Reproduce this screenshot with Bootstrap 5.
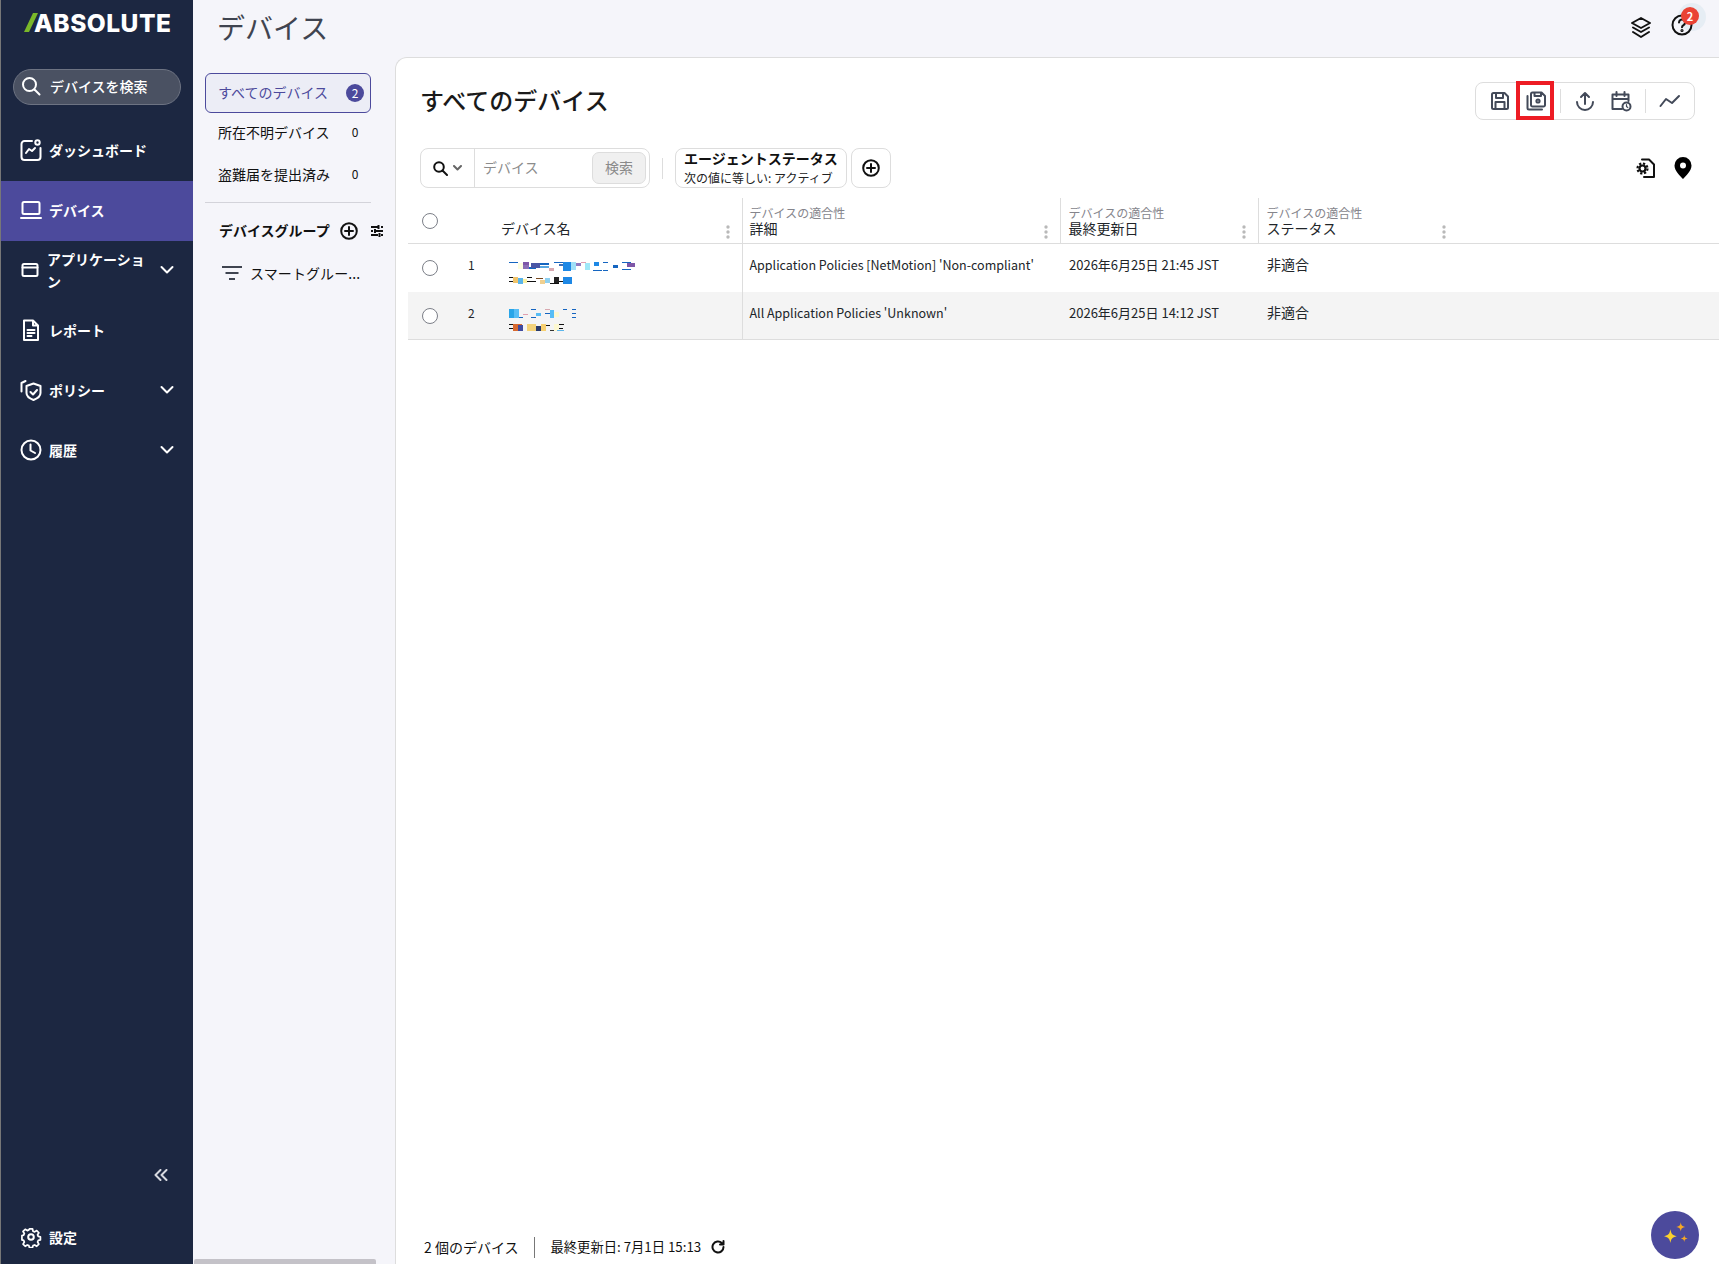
<!DOCTYPE html>
<html lang="ja">
<head>
  <meta charset="UTF-8">
  <title>デバイス</title>
  <link href="https://cdn.jsdelivr.net/npm/bootstrap@5.3.0/dist/css/bootstrap.min.css" rel="stylesheet">
  <style>
    html, body { height: 100%; }
    body {
      font-family: "Noto Sans CJK JP", "Noto Sans", sans-serif;
      background: #f5f5fa;
      color: #111;
      overflow: hidden;
    }
    svg { display: block; flex-shrink: 0; }
    .ico { fill: none; stroke: currentColor; stroke-width: 2; stroke-linecap: round; stroke-linejoin: round; }
    .app-root { height: 1264px; }

    /* sidebar */
    .side-bar { width: 193px; background: #1c2741; border-left: 1px solid #777; color: #fff; flex-shrink: 0; }
    .logo-row { height: 46px; padding: 13px 0 0 22px; }
    .logo-text { font-family: Inter, "Liberation Sans", sans-serif; font-weight: 800; font-size: 24.5px; line-height: 20px; letter-spacing: .5px; margin-left: -7px; }
    .side-search { margin: 23px 12px 0 12px; height: 36px; border-radius: 18px; background: #4a5162; border: 1px solid #6d7382; padding-left: 7px; padding-bottom: 2px; gap: 9px; font-size: 14px; font-weight: 500; }
    .side-list { margin-top: 16px; }
    .side-item { height: 60px; padding: 0 19px 2px 19px; font-size: 14px; font-weight: 700; gap: 7px; }
    .side-item.on { background: #4c4a9c; }
    .side-item.last-item { height: 54px; padding-bottom: 0; }
    .side-item .lbl { line-height: 22px; }
    .side-wrap { width: 100px; }
    .side-foot { margin-top: auto; }
    .collapse-row { padding: 0 25px 29px 0; color: #d8dae0; }

    /* top */
    .page-top { height: 57px; padding: 8px 20px 0 24px; }
    .page-title { font-size: 28px; font-weight: 400; line-height: 38px; margin: 0; color: #3f4450; }
    .top-icons { margin-top: 6px; }
    .help-wrap { width: 28px; height: 28px; position: relative; margin-left: 19px; }
    .help-halo { position: absolute; left: 7px; top: -11px; width: 28px; height: 28px; border-radius: 50%; background: #e6edf4; }
    .help-wrap svg { position: relative; }
    .help-badge { position: absolute; left: 10px; top: -7px; width: 18px; height: 18px; border-radius: 50%; background: #ea4335; color: #fff; font-size: 11px; font-weight: 700; line-height: 18px; text-align: center; }

    /* middle column */
    .mid-col { width: 202px; padding: 16px 0 0 12px; flex-shrink: 0; position: relative; }
    .mid-item { width: 166px; height: 40px; padding: 0 6px 2px 12px; font-size: 14px; border: 1px solid transparent; border-radius: 6px; }
    .mid-item.on { background: #ecedf6; border-color: #4c4a9c; color: #4c4a9c; }
    .mid-item.third-item { margin-top: 1px; padding-bottom: 0; }
    .mid-count { width: 18px; text-align: center; font-size: 12px; }
    .mid-item.on .mid-count { height: 18px; border-radius: 50%; background: #4c4a9c; color: #fff; line-height: 18px; margin-top: 2px; }
    .mid-divider { width: 166px; border-top: 1px solid #d3d3da; margin: 8px 0 0; }
    .group-head { height: 55px; padding-left: 14px; font-size: 14px; font-weight: 700; width: 190px; }
    .smart-row { padding-left: 17px; height: 30px; font-size: 14px; gap: 8px; letter-spacing: .1px; }
    .mid-scroll { position: absolute; left: 1px; bottom: 0; width: 182px; height: 5px; background: #c4c2c8; border-radius: 2px 2px 0 0; }

    /* main card */
    .main-card { background: #fff; border-top: 1px solid #ddd; border-left: 1px solid #ddd; border-top-left-radius: 12px; padding-left: 12px; position: relative; min-width: 0; }
    .card-head { height: 90px; padding: 24px 23px 0 12px; }
    .card-title-txt { font-size: 24px; font-weight: 500; margin: 1px 0 0; line-height: 34px; color: #1a1a1a; }
    .tool-box { width: 220px; height: 38px; border: 1px solid #ddd; border-radius: 8px; color: #434a59; padding-left: 6px; position: relative; margin-right: 1px; }
    .tool-ico { width: 36px; display: flex; justify-content: center; }
    .tool-sep { width: 1px; height: 24px; background: #ddd; margin: 0 6px; }
    .red-mark { position: absolute; left: 40px; top: -2px; width: 38px; height: 39px; border: 4px solid #ed1c24; }
    .filter-row { height: 50px; padding: 0 26px 0 12px; gap: 4px; }
    .search-box { width: 230px; height: 40px; border: 1px solid #ddd; border-radius: 8px; font-size: 14px; }
    .search-type { width: 54px; height: 100%; border-right: 1px solid #ddd; gap: 5px; padding-left: 12px; }
    .search-hold { color: #8c8c8c; padding: 0 0 2px 8px; }
    .search-btn { width: 54px; height: 32px; margin: 0 3px 0 auto; background: #f0f0f0; border: 1px solid #ddd; border-radius: 7px; color: #8a8a8a; font-size: 14px; padding: 0 0 2px; }
    .filter-sep { width: 1px; height: 21px; background: #ddd; margin: 0 12px; }
    .chip-box { width: 172px; height: 40px; border: 1px solid #ddd; border-radius: 8px; padding: 0 8px; }
    .chip-name { font-size: 14px; font-weight: 700; line-height: 19px; white-space: nowrap; }
    .chip-val { font-size: 12px; line-height: 17px; margin-top: 1px; white-space: nowrap; color: #222; }
    .add-box { width: 40px; height: 40px; border: 1px solid #ddd; border-radius: 8px; margin-left: 4px; }
    .loc-icons { gap: 17px; margin-top: 9px; }

    /* table */
    .dev-table { table-layout: fixed; width: 1311px; margin: 0; }
    .dev-table > :not(caption) > * > * { padding: 0; border-bottom: 1px solid #ddd; background: transparent; box-shadow: none; vertical-align: top; font-weight: 400; }
    .dev-table thead th { height: 45px; }
    .dev-table tbody tr.row-a td { height: 49px; border-bottom: 0; }
    .dev-table tbody tr.row-b td { height: 47px; background: #f4f4f4; }
    .dev-table .with-line { border-left: 1px solid #ddd; }
    .head-in { height: 44px; padding: 0 12px 0 7px; }
    .head-top { font-size: 12px; line-height: 15px; color: #85858c; }
    .head-name { font-size: 14px; line-height: 17px; margin-bottom: 5px; }
    .dots-ico { color: #b9b9b9; margin-bottom: 3px; }
    .check-cell { padding-left: 14px !important; }
    .form-check-input.round-check { width: 16px; height: 16px; margin: 0; border-radius: 50%; border: 1px solid #7c7f88; }
    .num-cell { font-size: 12px; padding: 12px 0 0 16px !important; line-height: 18px; }
    .txt-cell { font-size: 12.500px; line-height: 18px; padding: 12px 0 0 7px !important; white-space: nowrap; }
    .txt-cell.big { font-size: 14px; padding-left: 9px !important; padding-top: 11px !important; }
    .txt-cell.mid { font-size: 13px; padding-left: 9px !important; }

    .foot-row { margin-top: auto; height: 34px; padding: 0 0 0 16px; font-size: 14px; }
    .foot-time { font-size: 13.300px; }
    .foot-sep { width: 1px; height: 21px; background: #777; margin: 0 16px 0 15px; }
    .fab-btn { position: absolute; right: 20px; bottom: 5px; width: 48px; height: 48px; border-radius: 50%; background: #4c4a9c; }
  </style>
</head>
<body>
<div class="d-flex app-root">

  <aside class="side-bar d-flex flex-column">
    <div class="logo-row d-flex align-items-start">
      <svg width="18" height="20" viewBox="0 0 18 20"><polygon points="1,19 6,19 15,0 10,0" fill="#7ab829"/></svg>
      <span class="logo-text">ABSOLUTE</span>
    </div>
    <div class="side-search d-flex align-items-center">
      <svg class="ico" width="20" height="20" viewBox="0 0 20 20" stroke-width="2.200"><circle cx="8.500" cy="8.500" r="6.500"/><path d="M13.500 13.500 18.500 18.500"/></svg>
      <span>デバイスを検索</span>
    </div>
    <div class="side-list">
      <div class="side-item d-flex align-items-center">
        <svg class="ico" width="22" height="22" viewBox="0 0 22 22" stroke-width="1.800"><path d="M12 2H4.500A3 3 0 0 0 1.500 5v13a3 3 0 0 0 3 3h13a3 3 0 0 0 3-3V9"/><circle cx="17.500" cy="3.500" r="2.200"/><path d="M6 14l3-4 3 2 3-3"/></svg>
        <span class="lbl">ダッシュボード</span>
      </div>
      <div class="side-item on d-flex align-items-center">
        <svg class="ico" width="22" height="22" viewBox="0 0 22 22" stroke-width="1.800"><rect x="2.500" y="3" width="17" height="12" rx="1.500"/><path d="M1 19h20"/></svg>
        <span class="lbl">デバイス</span>
      </div>
      <div class="side-item d-flex align-items-center" style="gap:5px">
        <svg class="ico" width="22" height="22" viewBox="0 0 22 22" stroke-width="1.600"><rect x="2.500" y="5" width="15" height="12" rx="1.500"/><path d="M2.500 8.500h15"/></svg>
        <span class="lbl side-wrap">アプリケーション</span>
        <svg class="ico ms-auto" width="14" height="14" viewBox="0 0 14 14" stroke-width="1.300"><path d="M1.500 4 7 9.500 12.500 4"/></svg>
      </div>
      <div class="side-item d-flex align-items-center">
        <svg class="ico" width="22" height="22" viewBox="0 0 22 22" stroke-width="1.800"><path d="M4 1.500h9l5 5v14.500H4zM13 1.500v5h5M7.500 11h7M7.500 14h7M7.500 17h4"/></svg>
        <span class="lbl">レポート</span>
      </div>
      <div class="side-item d-flex align-items-center">
        <svg class="ico" width="22" height="22" viewBox="0 0 22 22" stroke-width="1.700"><path d="M13.500 4.500 20.500 7v7c0 3-3 5.500-7 7-4-1.500-7-4-7-7V7zM10.500 13l2.500 2.500 4-4.500M5.500 2 1.500 4v8.500"/></svg>
        <span class="lbl">ポリシー</span>
        <svg class="ico ms-auto" width="14" height="14" viewBox="0 0 14 14" stroke-width="1.300"><path d="M1.500 4 7 9.500 12.500 4"/></svg>
      </div>
      <div class="side-item d-flex align-items-center">
        <svg class="ico" width="22" height="22" viewBox="0 0 22 22" stroke-width="1.800"><circle cx="11" cy="11" r="9.500"/><path d="M10.500 5.500V11.500L15 14"/></svg>
        <span class="lbl">履歴</span>
        <svg class="ico ms-auto" width="14" height="14" viewBox="0 0 14 14" stroke-width="1.300"><path d="M1.500 4 7 9.500 12.500 4"/></svg>
      </div>
    </div>
    <div class="side-foot">
      <div class="collapse-row d-flex justify-content-end">
        <svg class="ico" width="14" height="12" viewBox="0 0 14 12" stroke-width="1.800"><path d="M6.500 1 1.500 6l5 5M12.500 1l-5 5 5 5"/></svg>
      </div>
      <div class="side-item last-item d-flex align-items-center">
        <svg class="ico" width="22" height="22" viewBox="0 0 22 22" stroke-width="1.700"><circle cx="11" cy="11" r="2.800"/><path d="M9.200 1.500h3.600l.6 2.800 1.900.8 2.400-1.500 2.500 2.500-1.500 2.400.8 1.900 2.500.6v3.400l-2.500.6-.8 1.900 1.500 2.400-2.500 2.500-2.400-1.500-1.900.8-.6 2.300H9.200l-.6-2.300-1.900-.8-2.400 1.500-2.500-2.500 1.500-2.400-.8-1.900-2-.6V9.500l2-.6.800-1.900L1.800 4.600l2.500-2.500L6.700 3.600l1.900-.8z" transform="translate(1.500 1.500) scale(.86)"/></svg>
        <span class="lbl">設定</span>
      </div>
    </div>
  </aside>

  <div class="flex-grow-1 d-flex flex-column" style="min-width:0">
    <header class="page-top d-flex align-items-start justify-content-between">
      <h1 class="page-title">デバイス</h1>
      <div class="top-icons d-flex align-items-center">
        <svg class="ico" width="22" height="24" viewBox="0 0 22 24" stroke-width="1.900"><path d="M11 2 20 7l-9 5-9-5zM3 11.500l8 4.500 8-4.500M3 16l8 5 8-5"/></svg>
        <div class="help-wrap">
          <span class="help-halo"></span>
          <svg class="ico" width="22" height="22" viewBox="0 0 22 22" stroke-width="1.900"><circle cx="11" cy="11" r="9.500"/><path d="M8 8.500a3 3 0 1 1 4.500 2.600c-1 .6-1.500 1.100-1.500 2.200"/><circle cx="11" cy="16.500" r=".6"/></svg>
          <span class="help-badge">2</span>
        </div>
      </div>
    </header>

    <div class="d-flex flex-grow-1" style="min-height:0">
      <nav class="mid-col">
        <div class="mid-item on d-flex align-items-center justify-content-between"><span>すべてのデバイス</span><span class="mid-count">2</span></div>
        <div class="mid-item d-flex align-items-center justify-content-between"><span>所在不明デバイス</span><span class="mid-count">0</span></div>
        <div class="mid-item third-item d-flex align-items-center justify-content-between"><span>盗難届を提出済み</span><span class="mid-count">0</span></div>
        <div class="mid-divider"></div>
        <div class="group-head d-flex align-items-center">
          <span>デバイスグループ</span>
          <svg class="ico" style="margin-left:10px" width="18" height="18" viewBox="0 0 18 18" stroke-width="1.600"><circle cx="9" cy="9" r="7.800"/><path d="M9 5v8M5 9h8"/></svg>
          <svg class="ico" style="margin-left:12px" width="14" height="14" viewBox="0 0 14 14" stroke-width="1.500"><path d="M1 3h7M11 3h2M8.500 1v4M1 7h2M6 7h7M5 5v4M1 11h7M11 11h2M9.500 9v4" stroke-linecap="butt"/></svg>
        </div>
        <div class="smart-row d-flex align-items-center">
          <svg class="ico" style="color:#3f4450" width="20" height="14" viewBox="0 0 20 14" stroke-width="1.700"><path d="M0 1h20M3.500 7h13M7 13h6" stroke-linecap="butt"/></svg>
          <span>スマートグルー...</span>
        </div>
        <div class="mid-scroll"></div>
      </nav>

      <main class="main-card flex-grow-1 d-flex flex-column">
        <div class="card-head d-flex justify-content-between align-items-start">
          <h2 class="card-title-txt">すべてのデバイス</h2>
          <div class="tool-box d-flex align-items-center">
            <span class="tool-ico"><svg class="ico" width="20" height="20" viewBox="0 0 20 20" stroke-width="1.700"><path d="M2 3.500A1.500 1.500 0 0 1 3.500 2h11L18 5.500v11a1.500 1.500 0 0 1-1.500 1.500h-13A1.500 1.500 0 0 1 2 16.500zM6 2v5h7V2M5.500 18v-7h9v7"/></svg></span>
            <span class="tool-ico"><svg class="ico" width="20" height="20" viewBox="0 0 20 20" stroke-width="1.900"><path d="M6.500 1.500h9L19 5v9a1.500 1.500 0 0 1-1.500 1.500h-11A1.500 1.500 0 0 1 5 14V3a1.500 1.500 0 0 1 1.500-1.500zM8.500 1.500V5h6.500V1.500M1.500 5v12a1.500 1.500 0 0 0 1.500 1.500h13"/><circle cx="12" cy="10" r="1.600"/></svg></span>
            <span class="tool-sep"></span>
            <span class="tool-ico"><svg class="ico" width="20" height="20" viewBox="0 0 20 20" stroke-width="1.800"><path d="M10 13V2M6 6l4-4 4 4M2 11a8 8 0 0 0 16 0"/></svg></span>
            <span class="tool-ico"><svg class="ico" width="22" height="22" viewBox="0 0 22 22" stroke-width="1.700"><path d="M12 19H2.500V4.500h16V11M2.500 9h16M6.500 2v4M14.500 2v4"/><circle cx="16.500" cy="16.500" r="4"/><path d="M16.500 14.500v2l1.300 1" stroke-width="1.200"/></svg></span>
            <span class="tool-sep"></span>
            <span class="tool-ico"><svg class="ico" width="22" height="14" viewBox="0 0 22 14" stroke-width="2"><path d="M1.500 12 7 5l6 4 7-7"/></svg></span>
            <span class="red-mark"></span>
          </div>
        </div>

        <div class="filter-row d-flex align-items-start">
          <div class="d-flex flex-grow-1 align-items-center">
            <div class="search-box d-flex align-items-center">
              <div class="search-type d-flex align-items-center">
                <svg class="ico" width="15" height="15" viewBox="0 0 15 15" stroke-width="1.800"><circle cx="6" cy="6" r="4.800"/><path d="M9.500 9.500 14 14"/></svg>
                <svg class="ico" style="color:#666" width="9" height="6" viewBox="0 0 9 6" stroke-width="1.100"><path d="M1 1l3.500 3.500L8 1"/></svg>
              </div>
              <span class="search-hold">デバイス</span>
              <button type="button" class="btn search-btn">検索</button>
            </div>
            <span class="filter-sep"></span>
            <div class="chip-box d-flex flex-column">
              <span class="chip-name">エージェントステータス</span>
              <span class="chip-val">次の値に等しい: アクティブ</span>
            </div>
            <div class="add-box d-flex align-items-center justify-content-center">
              <svg class="ico" width="18" height="18" viewBox="0 0 18 18" stroke-width="1.600"><circle cx="9" cy="9" r="7.800"/><path d="M9 5v8M5 9h8"/></svg>
            </div>
          </div>
          <div class="loc-icons d-flex align-items-center">
            <svg class="ico" width="20" height="22" viewBox="0 0 20 22" stroke-width="1.800">
              <path d="M6 2.500h7l5 5V20H8"/>
              <circle cx="6.500" cy="11.500" r="5" stroke-width="2.200" stroke-dasharray="2.200 1.700" stroke-linecap="butt"/>
              <circle cx="6.500" cy="11.500" r="3" stroke-width="2.200"/>
            </svg>
            <svg width="20" height="22" viewBox="0 0 20 22"><path fill-rule="evenodd" d="M10 0a8.500 8.500 0 0 1 8.500 8.500C18.500 14 13 18.500 10 22 7 18.500 1.500 14 1.500 8.500A8.500 8.500 0 0 1 10 0zm0 5.500a3 3 0 1 0 0 6 3 3 0 0 0 0-6z" fill="#000"/></svg>
          </div>
        </div>

        <table class="table dev-table">
          <colgroup>
            <col style="width:44px"><col style="width:36px"><col style="width:254px"><col style="width:318px"><col style="width:198px"><col style="width:198px"><col>
          </colgroup>
          <thead>
            <tr>
              <th class="check-cell"><input class="form-check-input round-check" style="margin-top:15px" type="checkbox" aria-label="all"></th>
              <th></th>
              <th>
                <div class="head-in d-flex justify-content-between align-items-end" style="padding-left:13px">
                  <div class="head-name">デバイス名</div>
                  <svg class="dots-ico" width="4" height="14" viewBox="0 0 4 14" fill="currentColor"><circle cx="2" cy="2" r="1.700"/><circle cx="2" cy="7" r="1.700"/><circle cx="2" cy="12" r="1.700"/></svg>
                </div>
              </th>
              <th class="with-line">
                <div class="head-in d-flex justify-content-between align-items-end">
                  <div><div class="head-top">デバイスの適合性</div><div class="head-name">詳細</div></div>
                  <svg class="dots-ico" width="4" height="14" viewBox="0 0 4 14" fill="currentColor"><circle cx="2" cy="2" r="1.700"/><circle cx="2" cy="7" r="1.700"/><circle cx="2" cy="12" r="1.700"/></svg>
                </div>
              </th>
              <th class="with-line">
                <div class="head-in d-flex justify-content-between align-items-end" style="padding-left:8px">
                  <div><div class="head-top">デバイスの適合性</div><div class="head-name">最終更新日</div></div>
                  <svg class="dots-ico" width="4" height="14" viewBox="0 0 4 14" fill="currentColor"><circle cx="2" cy="2" r="1.700"/><circle cx="2" cy="7" r="1.700"/><circle cx="2" cy="12" r="1.700"/></svg>
                </div>
              </th>
              <th class="with-line">
                <div class="head-in d-flex justify-content-between align-items-end" style="padding-left:8px;padding-right:10px">
                  <div><div class="head-top">デバイスの適合性</div><div class="head-name">ステータス</div></div>
                  <svg class="dots-ico" width="4" height="14" viewBox="0 0 4 14" fill="currentColor"><circle cx="2" cy="2" r="1.700"/><circle cx="2" cy="7" r="1.700"/><circle cx="2" cy="12" r="1.700"/></svg>
                </div>
              </th>
              <th></th>
            </tr>
          </thead>
          <tbody>
            <tr class="row-a">
              <td class="check-cell"><input class="form-check-input round-check" style="margin-top:16px" type="checkbox" aria-label="1"></td>
              <td class="num-cell">1</td>
              <td style="padding:18px 0 0 21px">
                <svg width="127" height="23" viewBox="0 0 127 23" shape-rendering="crispEdges">
                  <g fill="#1565c0">
                    <rect x="0" y="0" width="9" height="1"/><rect x="9" y="1" width="5" height="6" fill="#fdfde0"/><rect x="14" y="0" width="6" height="3" fill="#7e57a8"/><rect x="14" y="3" width="6" height="4" fill="#8b6fb5"/><rect x="20" y="5" width="7" height="2"/><rect x="22" y="1" width="9" height="5" fill="#4a56a5"/><rect x="31" y="1" width="9" height="2"/><rect x="31" y="4" width="9" height="2" fill="#5aa7e0"/><rect x="40" y="6" width="5" height="3" fill="#d8a9b0"/><rect x="45" y="0" width="9" height="1"/><rect x="50" y="2" width="6" height="2" fill="#3f6fb5"/><rect x="54" y="0" width="8" height="9" fill="#1e88e5"/><rect x="62" y="0" width="5" height="8" fill="#9fe0f8"/><rect x="67" y="1" width="5" height="3" fill="#8e7ac0"/><rect x="72" y="0" width="5" height="1" fill="#e0a0b0"/><rect x="76" y="1" width="5" height="7" fill="#9fe8f8"/><rect x="84" y="8" width="9" height="1"/><rect x="85" y="0" width="5" height="4" fill="#1e88e5"/><rect x="94" y="0" width="5" height="1"/><rect x="94" y="8" width="5" height="1"/><rect x="104" y="3" width="5" height="3" fill="#1565c0"/><rect x="113" y="0" width="9" height="1"/><rect x="113" y="7" width="9" height="1"/><rect x="118" y="1" width="8" height="4" fill="#7e57a8"/>
                  </g>
                  <g fill="#111">
                    <rect x="0" y="15" width="8" height="1"/><rect x="0" y="19" width="8" height="1"/><rect x="4" y="15" width="5" height="6" fill="#f0c36a"/><rect x="9" y="16" width="5" height="6" fill="#5bb5ea"/><rect x="14" y="17" width="4" height="4" fill="#fbf0a0"/><rect x="18" y="15" width="5" height="1"/><rect x="18" y="19" width="9" height="1"/><rect x="27" y="16" width="7" height="1" fill="#7a4a20"/><rect x="31" y="18" width="5" height="4" fill="#f0d090"/><rect x="36" y="16" width="5" height="5" fill="#8fd0f0"/><rect x="41" y="21" width="9" height="1"/><rect x="45" y="15" width="5" height="6" fill="#222"/><rect x="50" y="19" width="9" height="1"/><rect x="54" y="15" width="9" height="7" fill="#1e88e5"/>
                  </g>
                </svg>
              </td>
              <td class="with-line txt-cell">Application Policies [NetMotion] 'Non-compliant'</td>
              <td class="txt-cell mid">2026年6月25日 21:45 JST</td>
              <td class="txt-cell big">非適合</td>
              <td></td>
            </tr>
            <tr class="row-b">
              <td class="check-cell"><input class="form-check-input round-check" style="margin-top:16px" type="checkbox" aria-label="2"></td>
              <td class="num-cell">2</td>
              <td style="padding:17px 0 0 21px">
                <svg width="68" height="23" viewBox="0 0 68 23" shape-rendering="crispEdges">
                  <rect x="0" y="0" width="5" height="9" fill="#29a5e8"/><rect x="5" y="0" width="5" height="9" fill="#58bdf5"/><rect x="10" y="8" width="4" height="1" fill="#1565c0"/><rect x="14" y="5" width="5" height="1" fill="#e0a0b0"/><rect x="22" y="0" width="5" height="1" fill="#1565c0"/><rect x="22" y="8" width="5" height="1" fill="#1565c0"/><rect x="27" y="4" width="5" height="3" fill="#58bdf5"/><rect x="36" y="0" width="5" height="1" fill="#d8a9b0"/><rect x="36" y="4" width="5" height="1" fill="#1565c0"/><rect x="41" y="1" width="4" height="8" fill="#58bdf5"/><rect x="45" y="3" width="5" height="5" fill="#fdf8d0"/><rect x="54" y="0" width="4" height="1" fill="#1565c0"/><rect x="63" y="0" width="4" height="1" fill="#1565c0"/><rect x="63" y="4" width="4" height="1" fill="#1565c0"/><rect x="63" y="8" width="4" height="1" fill="#1565c0"/>
                  <rect x="0" y="15" width="9" height="1" fill="#111"/><rect x="0" y="19" width="9" height="1" fill="#111"/><rect x="4" y="15" width="9" height="7" fill="#d86a30"/><rect x="9" y="16" width="5" height="6" fill="#3f4aa0"/><rect x="18" y="19" width="6" height="1" fill="#111"/><rect x="18" y="15" width="9" height="7" fill="#f3d27a"/><rect x="27" y="17" width="5" height="5" fill="#2a3a6a"/><rect x="32" y="15" width="5" height="7" fill="#f7d070"/><rect x="37" y="16" width="4" height="1" fill="#111"/><rect x="41" y="21" width="8" height="1" fill="#333"/><rect x="45" y="15" width="5" height="7" fill="#fdf8d0"/><rect x="50" y="15" width="5" height="1" fill="#111"/><rect x="50" y="19" width="4" height="1" fill="#111"/><rect x="48" y="21" width="7" height="1" fill="#5bb5ea"/>
                </svg>
              </td>
              <td class="with-line txt-cell">All Application Policies 'Unknown'</td>
              <td class="txt-cell mid">2026年6月25日 14:12 JST</td>
              <td class="txt-cell big">非適合</td>
              <td></td>
            </tr>
          </tbody>
        </table>

        <div class="foot-row d-flex align-items-center">
          <span>2 個のデバイス</span>
          <span class="foot-sep"></span>
          <span class="foot-time">最終更新日: 7月1日 15:13</span>
          <svg class="ico" style="margin-left:10px" width="14" height="14" viewBox="0 0 14 14" stroke-width="1.700"><path d="M12.500 7A5.500 5.500 0 1 1 10.800 3L12.500 4.500M12.500 1v3.500H9"/></svg>
        </div>

        <div class="fab-btn d-flex align-items-center justify-content-center">
          <svg width="30" height="30" viewBox="0 0 26 26">
            <path d="M9 8c.7 4 1.500 5 5.500 6-4 1-4.800 2-5.500 6-.7-4-1.500-5-5.500-6 4-1 4.800-2 5.500-6z" fill="#fbd12d"/>
            <path d="M18 2c.4 2.800 1 3.500 4 4-3 .6-3.600 1.200-4 4-.4-2.800-1-3.400-4-4 3-.5 3.600-1.200 4-4z" fill="#f7a823"/>
            <path d="M21 13c.3 2 .8 2.500 3 3-2.200.4-2.700 1-3 3-.3-2-.8-2.600-3-3 2.200-.5 2.700-1 3-3z" fill="#f7a823"/>
          </svg>
        </div>
      </main>
    </div>
  </div>
</div>
<script src="https://cdn.jsdelivr.net/npm/bootstrap@5.3.0/dist/js/bootstrap.bundle.min.js"></script>
</body>
</html>
